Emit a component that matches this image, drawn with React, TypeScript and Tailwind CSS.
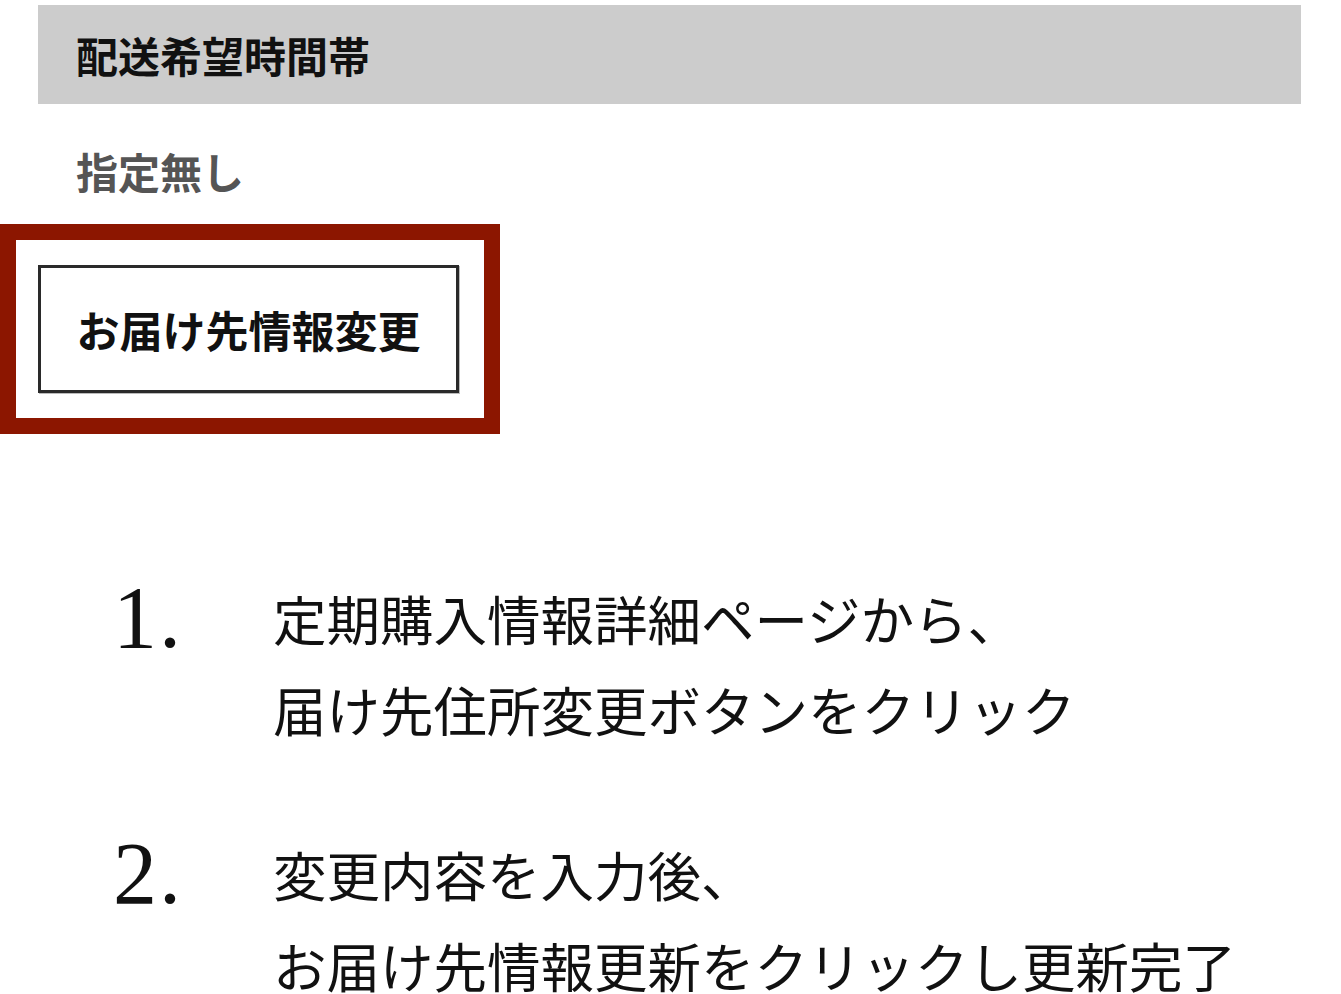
const jp = "font-['Noto_Sans_CJK_JP','Noto_Sans',sans-serif]"

const steps = [
    { num: "1.", lines: ["定期購入情報詳細ページから、", "届け先住所変更ボタンをクリック"] },
    { num: "2.", lines: ["変更内容を入力後、", "お届け先情報更新をクリックし更新完了"] },
]

export default function App() {
    return (
        <div className={`w-[1341px] h-[994px] bg-white overflow-hidden ${jp}`}>
            {/* delivery time block */}
            <div className="pl-[38px] pr-[40px] pt-[5px]">
                <div className="h-[99px] bg-[#cccccc] pl-[38px] flex items-center">
                    <h2 className="text-[42px] font-bold text-[#111] leading-none">配送希望時間帯</h2>
                </div>
                <p className="mt-[46px] pl-[38px] text-[42px] font-bold text-[#555] leading-none">指定無し</p>
            </div>

            {/* highlighted change button */}
            <div className="mt-[32px] w-[500px] h-[210px] border-[16px] border-[#8c1600] flex items-center pl-[22px]">
                <button className="w-[421px] h-[128px] border-[3px] border-[#2a2a2a] bg-white shadow-[1px_1px_0_#bbb] flex items-center justify-center">
                    <span className="text-[43px] font-bold text-[#111] leading-none">お届け先情報変更</span>
                </button>
            </div>

            {/* steps */}
            <ol className="mt-[138px] pl-[113px] flex flex-col gap-[74px]">
                {steps.map((s) => (
                    <li key={s.num} className="flex">
                        <span className="w-[160px] font-['Liberation_Serif',serif] text-[88px] leading-[92px] tracking-[2px] text-[#111]">{s.num}</span>
                        <div className="text-[53.5px] leading-[91px] text-[#111]">
                            {s.lines.map((l) => (
                                <div key={l}>{l}</div>
                            ))}
                        </div>
                    </li>
                ))}
            </ol>
        </div>
    )
}
